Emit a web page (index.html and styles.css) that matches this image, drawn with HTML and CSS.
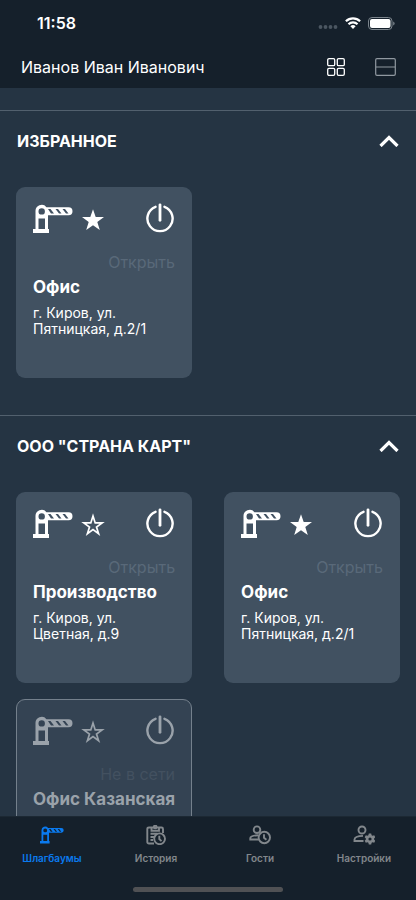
FILE: index.html
```html
<!DOCTYPE html>
<html lang="ru">
<head>
<meta charset="utf-8">
<meta name="viewport" content="width=device-width, initial-scale=1">
<title>Шлагбаумы</title>
<link rel="stylesheet" href="styles.css">
</head>
<body>
<svg class="sprite" aria-hidden="true">
  <symbol id="barrier" viewBox="0 0 40 30">
    <path fill="currentColor" fill-rule="evenodd" d="M2.500 7.500A6.200 6.200 0 0 1 13.500 3.200H35.500a4 4 0 0 1 0 8H15V25h1v4H0V25h2.500zM5.500 14.500V25h6.500V14.500zM8.700 4.200a3.200 3.200 0 1 0 0 6.400a3.200 3.200 0 1 0 0-6.400zM15 5h2.500l3.500 4.400H18zM22.500 5h2.500l3.500 4.400H26zM29.500 5h2.500l3.500 4.400H33z"/>
  </symbol>
  <symbol id="star" viewBox="0 0 24 24">
    <path fill="currentColor" d="M12 1.200l2.700 7.900h8.300l-6.700 4.900 2.500 8L12 17.200 5.200 22l2.500-8L1 9.100h8.300z"/>
  </symbol>
  <symbol id="star-empty" viewBox="0 0 24 24">
    <path fill="none" stroke="currentColor" stroke-width="1.700" d="M12 3l2.200 6.900h7l-5.700 4.200 2.100 6.600L12 16.500l-5.600 4.200 2.100-6.600-5.700-4.200h7z"/>
  </symbol>
  <symbol id="power" viewBox="0 0 30 30">
    <path fill="none" stroke="currentColor" stroke-width="2.400" stroke-linecap="round" d="M10.500 3.800a12.600 12.600 0 1 0 9 0"/>
    <path fill="none" stroke="currentColor" stroke-width="2.800" stroke-linecap="round" d="M15 1.800v15.500"/>
  </symbol>
  <symbol id="chevron" viewBox="0 0 20 12">
    <path fill="none" stroke="currentColor" stroke-width="3.200" d="M1.500 11l8.500-8.500 8.500 8.500"/>
  </symbol>
</svg>

<header class="top">
  <div class="status">
    <time>11:58</time>
    <div class="signals">
      <svg width="20" height="4" viewBox="0 0 20 4"><g fill="#4b5661"><circle cx="2.500" cy="2" r="1.900"/><circle cx="7.500" cy="2" r="1.900"/><circle cx="12.500" cy="2" r="1.900"/><circle cx="17.500" cy="2" r="1.900"/></g></svg>
      <svg width="16" height="12" viewBox="0 0 16 12"><g fill="none" stroke="#fff" stroke-width="2.200"><path d="M.9 4.200a10.200 10.200 0 0 1 14.200 0"/><path d="M3.500 7.200a6.400 6.400 0 0 1 9 0"/></g><path fill="#fff" d="M5.400 9.300a3.700 3.700 0 0 1 5.200 0L8 12z"/></svg>
      <svg width="27" height="13" viewBox="0 0 27 13"><rect x=".5" y=".5" width="23.500" height="12" rx="3.500" fill="none" stroke="#7b848c"/><rect x="2" y="2" width="20.500" height="9" rx="2" fill="#fff"/><path fill="#7b848c" d="M25.200 4.500q1.400.6 1.400 2t-1.400 2z"/></svg>
    </div>
  </div>
  <div class="bar">
    <h1>Иванов Иван Иванович</h1>
    <button class="view view-on" aria-label="Плитка"><svg width="18" height="18" viewBox="0 0 18 18"><g fill="none" stroke="currentColor" stroke-width="1.300"><rect x=".7" y=".7" width="7" height="7" rx="1.300"/><rect x="10.300" y=".7" width="7" height="7" rx="1.300"/><rect x=".7" y="10.300" width="7" height="7" rx="1.300"/><rect x="10.300" y="10.300" width="7" height="7" rx="1.300"/></g></svg></button>
    <button class="view" aria-label="Список"><svg width="21" height="18" viewBox="0 0 21 18"><path fill="none" stroke="currentColor" stroke-width="1.200" d="M2 .7h17q1.300 0 1.300 1.300v14q0 1.300-1.300 1.300H2Q.7 17.300.7 16V2Q.7.7 2 .7zM.7 9h19.600"/></svg></button>
  </div>
</header>

<main class="content">
  <section class="group">
    <button class="group-head"><span>ИЗБРАННОЕ</span><svg class="chevron"><use href="#chevron"/></svg></button>
    <div class="cards">
      <article class="card">
        <div class="card-icons"><svg class="barrier"><use href="#barrier"/></svg><button class="fav" aria-label="В избранном"><svg class="star"><use href="#star"/></svg></button><button class="switch" aria-label="Открыть"><svg class="power"><use href="#power"/></svg></button></div>
        <p class="state">Открыть</p>
        <h2>Офис</h2>
        <p class="address">г. Киров, ул. Пятницкая, д.2/1</p>
      </article>
    </div>
  </section>
  <section class="group">
    <button class="group-head"><span>ООО "СТРАНА КАРТ"</span><svg class="chevron"><use href="#chevron"/></svg></button>
    <div class="cards">
      <article class="card">
        <div class="card-icons"><svg class="barrier"><use href="#barrier"/></svg><button class="fav" aria-label="В избранное"><svg class="star"><use href="#star-empty"/></svg></button><button class="switch" aria-label="Открыть"><svg class="power"><use href="#power"/></svg></button></div>
        <p class="state">Открыть</p>
        <h2>Производство</h2>
        <p class="address">г. Киров, ул. Цветная, д.9</p>
      </article>
      <article class="card">
        <div class="card-icons"><svg class="barrier"><use href="#barrier"/></svg><button class="fav" aria-label="В избранном"><svg class="star"><use href="#star"/></svg></button><button class="switch" aria-label="Открыть"><svg class="power"><use href="#power"/></svg></button></div>
        <p class="state">Открыть</p>
        <h2>Офис</h2>
        <p class="address">г. Киров, ул. Пятницкая, д.2/1</p>
      </article>
      <article class="card card-offline">
        <div class="card-icons"><svg class="barrier"><use href="#barrier"/></svg><button class="fav" aria-label="В избранное"><svg class="star"><use href="#star-empty"/></svg></button><button class="switch" aria-label="Не в сети"><svg class="power"><use href="#power"/></svg></button></div>
        <p class="state">Не в сети</p>
        <h2>Офис Казанская</h2>
      </article>
    </div>
  </section>
</main>

<footer class="bottom">
  <nav class="tabs">
    <a class="tab tab-on" href="#gates"><svg width="24" height="20" viewBox="0 -1 40 32"><use href="#barrier" width="40" height="30"/></svg>Шлагбаумы</a>
    <a class="tab" href="#history"><svg width="20" height="20" viewBox="0 0 20 20"><g fill="none" stroke="currentColor" stroke-width="1.900"><path d="M8 18.500H3q-1.700 0-1.700-1.500V4q0-1.500 1.700-1.500h12.500Q17 2.500 17 4v4"/><path d="M5.500 2.500v3.200h7.500V2.500"/><circle cx="9.200" cy="1.900" r="1.300"/><path d="M4.500 8.800h7M4.500 12h3.500M4.500 15h2.500"/><circle cx="13.600" cy="13.800" r="5.400"/><path d="M13.300 10.800v3.200l2.200 2.100"/></g></svg>История</a>
    <a class="tab" href="#guests"><svg width="22" height="20" viewBox="0 0 22 20"><g fill="none" stroke="currentColor" stroke-width="1.900"><circle cx="8" cy="4.700" r="3.300"/><path d="M9.500 14.500H1.300v-1.500Q1.500 10.500 9 10.200"/><circle cx="15.300" cy="12.500" r="5.700"/><path d="M15 9.300v3.500l2.400 2"/></g></svg>Гости</a>
    <a class="tab" href="#settings"><svg width="22" height="20" viewBox="0 0 22 20"><g fill="none" stroke="currentColor" stroke-width="1.900"><circle cx="9" cy="5" r="3.500"/><path d="M10.500 16H1.500V14.500q.3-3.400 8.500-3.600"/></g><path fill="currentColor" fill-rule="evenodd" d="M15.800 8.500h2.400l.4 1.700 1 .6 1.600-.6 1.100 2-1.200 1.200v1.200l1.200 1.200-1.100 2-1.600-.6-1 .6-.4 1.700h-2.400l-.4-1.700-1-.6-1.600.6-1.100-2 1.200-1.200v-1.200l-1.200-1.200 1.100-2 1.600.6 1-.6zM17 12.400a1.600 1.600 0 1 0 0 3.200a1.600 1.600 0 1 0 0-3.200z"/></svg>Настройки</a>
  </nav>
  <div class="home"></div>
</footer>
</body>
</html>
```
FILE: styles.css
```css
* {
  box-sizing: border-box;
}

body {
  margin: 0;
  height: 100vh;
  display: flex;
  flex-direction: column;
  background: #253443;
  color: #fff;
  font-family: Inter, "Liberation Sans", sans-serif;
}

h1, h2, p {
  margin: 0;
}

button {
  padding: 0;
  border: 0;
  background: none;
  color: inherit;
  font: inherit;
}

svg {
  display: block;
  flex: none;
}

.sprite {
  position: absolute;
  width: 0;
  height: 0;
}

.top {
  flex: none;
  background: #15202b;
}

.status {
  display: flex;
  justify-content: space-between;
  align-items: center;
  height: 46px;
  padding: 0 21px 0 37px;
}

.status time {
  font-size: 16px;
  font-weight: 600;
}

.signals {
  display: flex;
  align-items: center;
  gap: 7px;
}

.signals svg:first-child {
  margin-top: 8px;
}

.bar {
  display: flex;
  align-items: center;
  gap: 30px;
  height: 42px;
  padding: 0 20px 0 21px;
}

.bar h1 {
  flex: 1;
  font-size: 16px;
  font-weight: 400;
}

.view {
  color: #9098a0;
}

.view-on {
  color: #fff;
}

.content {
  flex: 1;
  min-height: 0;
  overflow: hidden;
  padding-top: 22px;
}

.group {
  border-top: 1px solid #52606e;
  padding-bottom: 37px;
}

.group-head {
  display: flex;
  justify-content: space-between;
  align-items: center;
  width: 100%;
  height: 60px;
  padding: 0 17px;
  font-size: 16px;
  font-weight: 700;
}

.chevron {
  width: 20px;
  height: 12px;
}

.cards {
  display: grid;
  grid-template-columns: 1fr 1fr;
  gap: 16px 32px;
  padding: 16px 16px 0;
}

.card {
  min-height: 191px;
  padding: 15px 16px;
  border: 1px solid transparent;
  border-radius: 9px;
  background: #415161;
  background-clip: border-box;
}

.card-icons {
  display: flex;
  align-items: flex-end;
  height: 31px;
}

.barrier {
  width: 40px;
  height: 30px;
}

.fav {
  margin: 0 0 2px 8px;
}

.star {
  width: 24px;
  height: 24px;
}

.switch {
  align-self: flex-start;
  margin-left: auto;
}

.power {
  width: 30px;
  height: 30px;
}

.state {
  margin-top: 17px;
  color: #596979;
  font-size: 16px;
  line-height: 22px;
  text-align: right;
}

.card h2 {
  margin-top: 2px;
  font-size: 17px;
  font-weight: 700;
  line-height: 24px;
  white-space: nowrap;
}

.address {
  margin-top: 6px;
  font-size: 14px;
  line-height: 16px;
}

.card-offline {
  border-color: #74808c;
  background: #344353;
  color: #9aa2aa;
}

.card-offline .state {
  color: #435160;
}

.bottom {
  flex: none;
  height: 84px;
  display: flex;
  flex-direction: column;
  align-items: center;
  justify-content: space-between;
  padding: 8px 0;
  background: #15202b;
  border-top: 1px solid #1c2833;
}

.tabs {
  display: flex;
  width: 100%;
}

.tab {
  flex: 1;
  display: flex;
  flex-direction: column;
  align-items: center;
  gap: 6px;
  color: #82878c;
  font-size: 10px;
  font-weight: 600;
  line-height: 14px;
  text-decoration: none;
}

.tab-on {
  color: #0a7aef;
}

.home {
  width: 36%;
  height: 5px;
  border-radius: 3px;
  background: #505154;
}
```
